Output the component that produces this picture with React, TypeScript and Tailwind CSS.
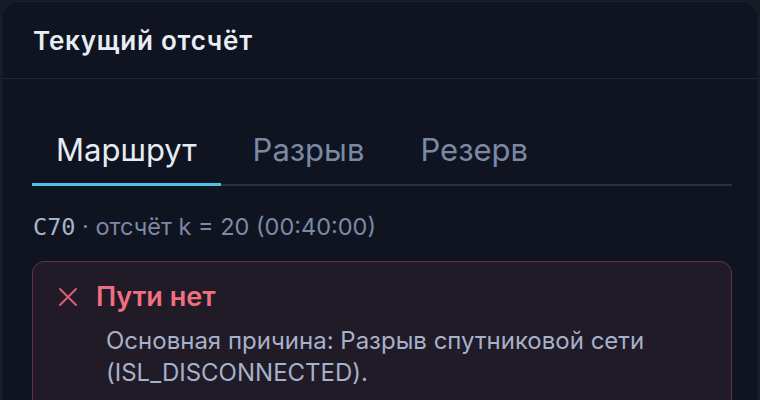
const tabs = ['Маршрут', 'Разрыв', 'Резерв'];

export default function App() {
  return (
    <div className="h-[400px] w-[760px] overflow-hidden bg-[#161b25] pt-[1px] font-['Inter',sans-serif]">
      <div className="mx-auto h-[460px] w-[758px] rounded-[18px] border border-[#1c2230] bg-[#0f1420]">
        <div className="flex h-[77px] items-center border-b border-[#1f2636] px-[31px]">
          <h2 className="text-[26px] font-semibold tracking-[0.03em] text-[#e8edf5]">Текущий отсчёт</h2>
        </div>

        <div className="pl-[30px] pr-[26px] pt-[52px]">
          <div className="flex gap-2 border-b-2 border-[#263046]">
            {tabs.map((t, i) => (
              <div
                key={t}
                className={
                  i === 0
                    ? '-mb-[2px] border-b-[3px] border-[#4cc4ea] px-[24px] pb-[14px] text-[31px] leading-[38px] text-[#e6ecf5]'
                    : '-mb-[2px] border-b-[3px] border-transparent px-[24px] pb-[14px] text-[31px] leading-[38px] text-[#7b89a5]'
                }
              >
                {t}
              </div>
            ))}
          </div>

          <div className="mt-[26px] pl-[1px] text-[23.5px] leading-[30px] text-[#7b89a5]">
            <span className="font-['DejaVu_Sans_Mono',monospace] text-[#aab4c8]">C70</span> · отсчёт k = 20 (00:40:00)
          </div>

          <div className="mt-[19px] rounded-[12px] border-[1.5px] border-[#633146] bg-[#211a27] pb-6 pl-[25px] pt-[18px]">
            <div className="flex items-center gap-[18px]">
              <svg width="20" height="20" viewBox="0 0 20 20" className="text-[#d9607a]">
                <path d="M2 2L18 18M18 2L2 18" stroke="currentColor" strokeWidth="2" strokeLinecap="round" />
              </svg>
              <span className="text-[27px] font-semibold leading-[34px] text-[#f0707f]">Пути нет</span>
            </div>
            <p className="mt-[11px] pl-[48px] text-[24px] leading-[32px] text-[#a6b1ca]">
              Основная причина: Разрыв спутниковой сети
              <br />
              (ISL_DISCONNECTED).
            </p>
          </div>
        </div>
      </div>
    </div>
  );
}
